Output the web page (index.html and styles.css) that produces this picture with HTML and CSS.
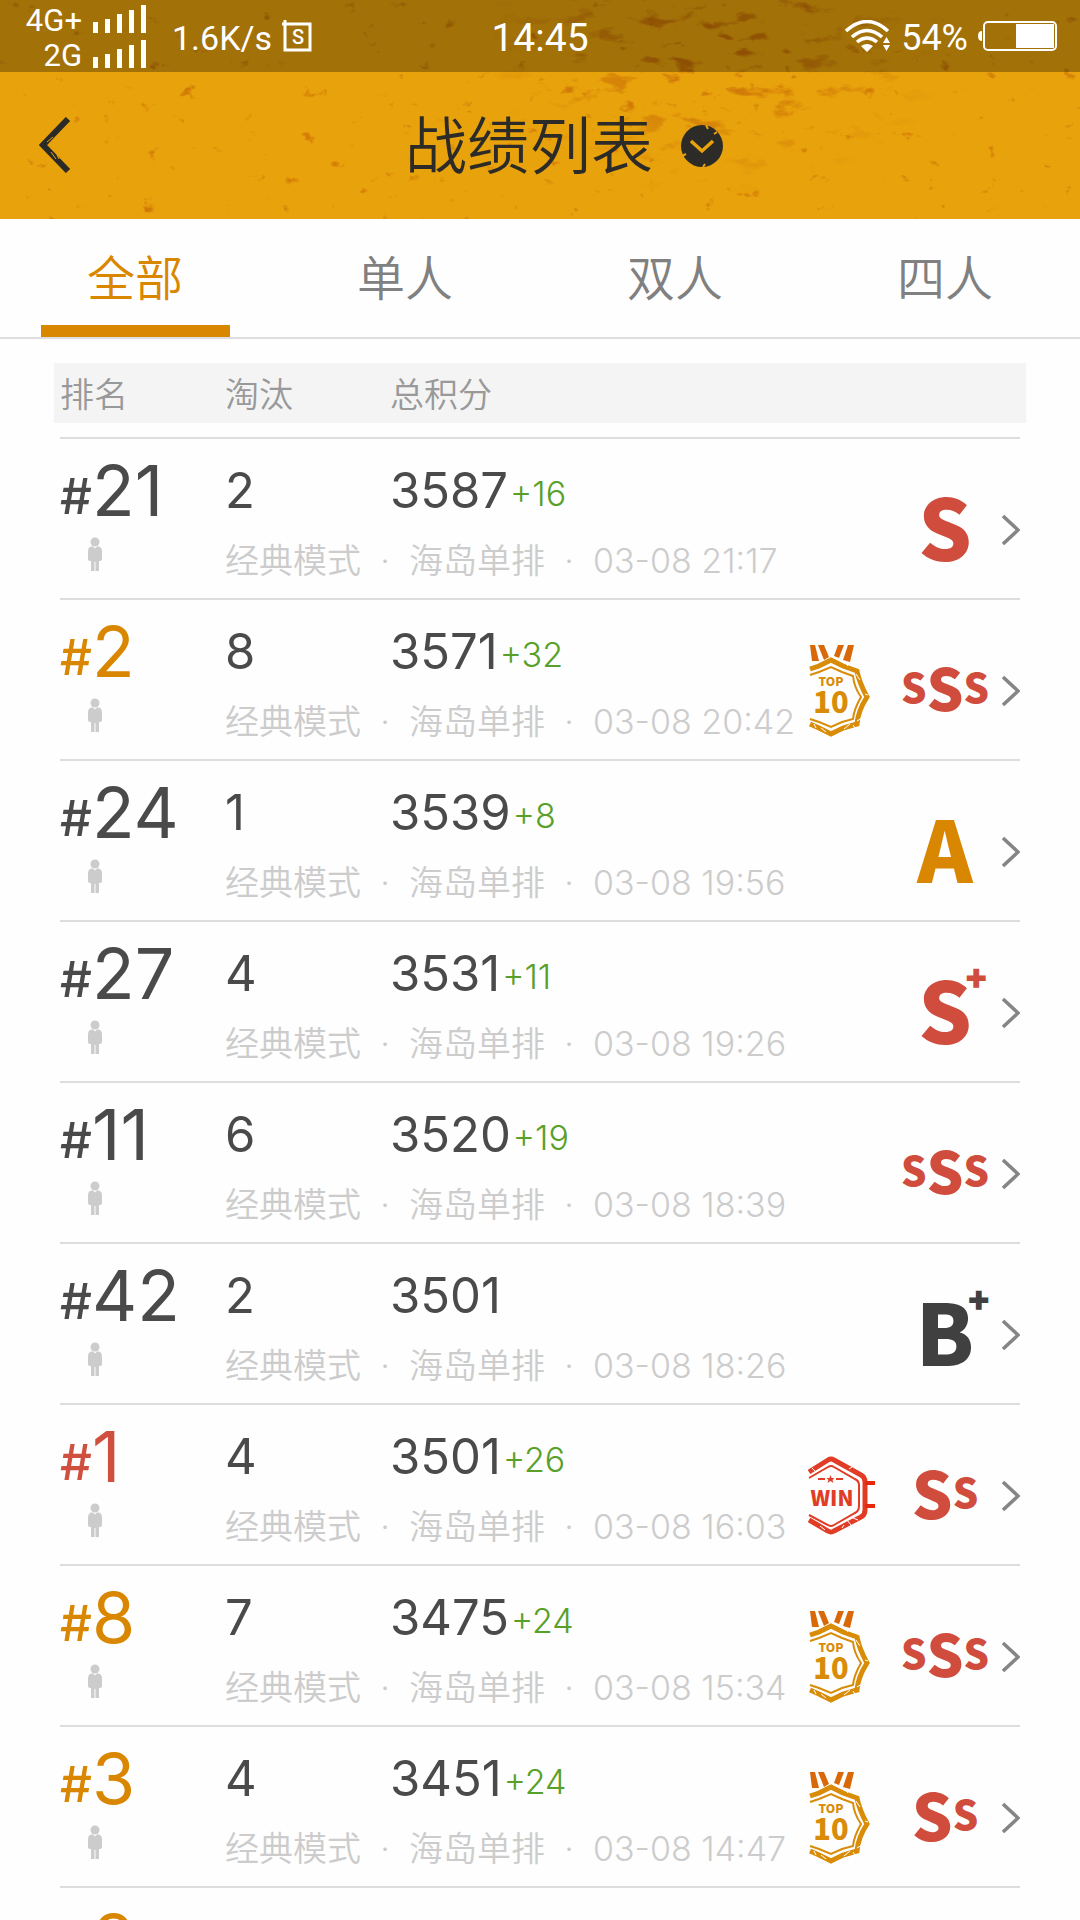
FILE: index.html
```html
<!DOCTYPE html>
<html lang="zh-CN">
<head>
<meta charset="utf-8">
<meta name="viewport" content="width=device-width, initial-scale=1">
<title>战绩列表</title>
<link rel="stylesheet" href="styles.css">
</head>
<body>
<svg class="defs" aria-hidden="true">
  <symbol id="person" viewBox="0 0 14 34"><circle cx="7" cy="5" r="4.500"/><path d="M3 9.500h2l2 2 2-2h2q3 1 3 5v7.500q0 2-2 2h-1v10H7.500v-9h-1v9H3v-10H2q-2 0-2-2v-7.500q0-4 3-5z"/></symbol>
  <symbol id="chevron" viewBox="0 0 18 32"><path d="M1 2l15 14L1 30" fill="none" stroke="#858585" stroke-width="3.500"/></symbol>
  <symbol id="bars" viewBox="0 0 54 28"><path d="M0 17h5v11H0zM12 14h5v14h-5zM24 9h5v19h-5zM36 5h5v23h-5zM48 0h5v28h-5z"/></symbol>
  <symbol id="top10" viewBox="0 0 68 92">
    <path d="M2 0h5l4 16H4zM10 0h6l5 12-5 3zM30 0h6l-5 13-5-2zM40 0h6l-4 17-7-2z" fill="#d96808"/>
    <path d="M2 24l9-3 12-6 12 6 14 5q2 11 10 26-9 14-10 27l-14 4-12 6-12-6-9-4" fill="none" stroke="#d88c08" stroke-width="5"/>
    <path d="M2 30l9-3 12-5 11 5 11 4q1 11 8 21-7 12-8 22l-11 3-11 5-12-5-9-3" fill="none" stroke="#d88c08" stroke-width="2"/>
    <path d="M37 17l3 4M48 29l4 6M57 49l3 1M49 76l5-3M36 84l6-5M13 83l5 4M45 80l2 3M6 79l2 4" stroke="#fff"/>
  </symbol>
  <symbol id="win" viewBox="0 0 68 92">
    <path d="M1 22L20 10q3-2 6 0l27 15q4 2 4 7v28q0 5-4 7L26 81q-3 2-6 0L1 70" fill="none" stroke="#e03c26" stroke-width="5"/>
    <path d="M1 28l19-11q3-2 6 0l21 12q4 2 4 6v21q0 5-4 7L26 75q-3 2-6 0L1 65" fill="none" stroke="#e03c26" stroke-width="2"/>
    <path d="M57 33h10M57 56h10" fill="none" stroke="#e8280c" stroke-width="4"/>
    <path d="M10 29h7M28 29h7" stroke="#e03c26" stroke-width="2"/>
    <path d="M22.500 25l1 3h3l-2 2 1 3-3-2-3 2 1-3-2-2h3z" fill="#e03c26"/>
    <path d="M4 18l3 3M12 76l5 4M39 70l4 5M45 68l5 2M34 78l2-3M41 19l3-2" stroke="#fff"/>
  </symbol>
</svg>

<div class="app">
  <div class="masthead">
    <svg class="grunge" aria-hidden="true">
      <defs>
        <filter id="specks" x="0" y="0" width="1" height="1" color-interpolation-filters="sRGB"><feTurbulence type="fractalNoise" baseFrequency="0.050 0.070" numOctaves="5" seed="8"/><feColorMatrix values="0 0 0 0 .82  0 0 0 0 .48  0 0 0 0 .02  7 0 0 0 -5.100"/></filter>
        <filter id="cracks" x="0" y="0" width="1" height="1" color-interpolation-filters="sRGB"><feTurbulence type="fractalNoise" baseFrequency="0.030 0.070" numOctaves="6" seed="21"/><feColorMatrix values="0 0 0 0 .78  0 0 0 0 .42  0 0 0 0 .02  7 0 0 0 -4.200"/></filter>
        <radialGradient id="fade"><stop offset="0" stop-color="#fff"/><stop offset="1" stop-color="#000"/></radialGradient>
        <mask id="patch"><ellipse cx="66%" cy="24%" rx="22%" ry="65%" fill="url(#fade)"/></mask>
      </defs>
      <rect width="100%" height="100%" filter="url(#specks)"/>
      <g mask="url(#patch)"><rect width="100%" height="100%" filter="url(#cracks)"/></g>
    </svg>
    <div class="status">
      <div class="networks">
        <span>4G+</span><svg class="bars"><use href="#bars"/></svg>
        <span>2G</span><svg class="bars"><use href="#bars"/></svg>
      </div>
      <span class="speed">1.6K/s</span>
      <svg class="sbox" viewBox="0 0 30 32" aria-hidden="true"><path d="M0 4h28v26H3V0" fill="none" stroke="#fff" stroke-width="3"/><text x="16" y="24" font-size="20" text-anchor="middle">S</text></svg>
      <time class="clock">14:45</time>
      <div class="power">
        <svg class="wifi" viewBox="0 0 46 32" aria-hidden="true"><path d="M1 11q21-19 42 0M7 17q15-13 30 0M12 22q10-8 20 0" fill="none" stroke="#fff" stroke-width="3.500"/><path d="M16 26q6-4 12 0l-6 6zM38 23l3.500-6 3.500 6zM38 25l3.500 6 3.500-6z" fill="#fff"/></svg>
        <span>54%</span>
        <svg class="battery" viewBox="0 0 80 32" aria-hidden="true"><rect x="6" y="2" width="72" height="28" rx="4" fill="none" stroke="#fff" stroke-width="2"/><path d="M4 11q-4 0-4 5t4 5zM38 4h38v24H38z" fill="#fff"/></svg>
      </div>
    </div>
    <header class="titlebar">
      <button class="back" aria-label="返回"><svg viewBox="0 0 32 56"><path d="M29 2L4 28l25 26" fill="none" stroke="#2a2a26" stroke-width="6"/><path d="M8 25l6-5M12 35l5 7M18 38l2 4" stroke="#e8a20c"/></svg></button>
      <h1>战绩列表</h1>
      <button class="more" aria-label="切换列表"><svg viewBox="0 0 42 42"><circle cx="21" cy="21" r="21" fill="#2c2b28"/><path d="M10 16l11 10 11-10" fill="none" stroke="#e8a20c" stroke-width="3.500"/><path d="M25 0l2 4M1 31l4-2M22 42l2-3M36 7l-3 2" stroke="#e8a20c" stroke-width="2"/></svg></button>
    </header>
  </div>

  <nav class="tabs">
    <button class="tab active">全部</button>
    <button class="tab">单人</button>
    <button class="tab">双人</button>
    <button class="tab">四人</button>
  </nav>

  <main class="list">
    <table>
      <thead><tr><th>排名</th><th>淘汰</th><th>总积分</th></tr></thead>
      <tbody>
        <tr><th class="rank" rowspan="2"><b><i>#</i>21</b><svg class="person"><use href="#person"/></svg></th><td class="kills">2</td><td class="score">3587<em>+16</em></td><td class="emblems" rowspan="2"><span class="grade">S</span><a href="#r1" aria-label="详情"><svg class="chevron"><use href="#chevron"/></svg></a></td></tr>
        <tr><td class="meta" colspan="2"><span>经典模式</span><span class="dot">·</span><span>海岛单排</span><span class="dot">·</span><time>03-08 21:17</time></td></tr>
      </tbody>
      <tbody>
        <tr><th class="rank gold" rowspan="2"><b><i>#</i>2</b><svg class="person"><use href="#person"/></svg></th><td class="kills">8</td><td class="score">3571<em>+32</em></td><td class="emblems" rowspan="2"><svg class="medal top" viewBox="0 0 68 92"><use href="#top10"/><text x="23" y="41" font-size="12">TOP</text><text x="23" y="68" font-size="29">10</text></svg><span class="grade triple"><small>S</small>S<small>S</small></span><a href="#r2" aria-label="详情"><svg class="chevron"><use href="#chevron"/></svg></a></td></tr>
        <tr><td class="meta" colspan="2"><span>经典模式</span><span class="dot">·</span><span>海岛单排</span><span class="dot">·</span><time>03-08 20:42</time></td></tr>
      </tbody>
      <tbody>
        <tr><th class="rank" rowspan="2"><b><i>#</i>24</b><svg class="person"><use href="#person"/></svg></th><td class="kills">1</td><td class="score">3539<em>+8</em></td><td class="emblems" rowspan="2"><span class="grade a">A</span><a href="#r3" aria-label="详情"><svg class="chevron"><use href="#chevron"/></svg></a></td></tr>
        <tr><td class="meta" colspan="2"><span>经典模式</span><span class="dot">·</span><span>海岛单排</span><span class="dot">·</span><time>03-08 19:56</time></td></tr>
      </tbody>
      <tbody>
        <tr><th class="rank" rowspan="2"><b><i>#</i>27</b><svg class="person"><use href="#person"/></svg></th><td class="kills">4</td><td class="score">3531<em>+11</em></td><td class="emblems" rowspan="2"><span class="grade">S<sup>+</sup></span><a href="#r4" aria-label="详情"><svg class="chevron"><use href="#chevron"/></svg></a></td></tr>
        <tr><td class="meta" colspan="2"><span>经典模式</span><span class="dot">·</span><span>海岛单排</span><span class="dot">·</span><time>03-08 19:26</time></td></tr>
      </tbody>
      <tbody>
        <tr><th class="rank" rowspan="2"><b><i>#</i>11</b><svg class="person"><use href="#person"/></svg></th><td class="kills">6</td><td class="score">3520<em>+19</em></td><td class="emblems" rowspan="2"><span class="grade triple"><small>S</small>S<small>S</small></span><a href="#r5" aria-label="详情"><svg class="chevron"><use href="#chevron"/></svg></a></td></tr>
        <tr><td class="meta" colspan="2"><span>经典模式</span><span class="dot">·</span><span>海岛单排</span><span class="dot">·</span><time>03-08 18:39</time></td></tr>
      </tbody>
      <tbody>
        <tr><th class="rank" rowspan="2"><b><i>#</i>42</b><svg class="person"><use href="#person"/></svg></th><td class="kills">2</td><td class="score">3501</td><td class="emblems" rowspan="2"><span class="grade b">B<sup>+</sup></span><a href="#r6" aria-label="详情"><svg class="chevron"><use href="#chevron"/></svg></a></td></tr>
        <tr><td class="meta" colspan="2"><span>经典模式</span><span class="dot">·</span><span>海岛单排</span><span class="dot">·</span><time>03-08 18:26</time></td></tr>
      </tbody>
      <tbody>
        <tr><th class="rank red" rowspan="2"><b><i>#</i>1</b><svg class="person"><use href="#person"/></svg></th><td class="kills">4</td><td class="score">3501<em>+26</em></td><td class="emblems" rowspan="2"><svg class="medal first" viewBox="0 0 68 92"><use href="#win"/><text x="24" y="56" font-size="21">WIN</text></svg><span class="grade double">S<small>S</small></span><a href="#r7" aria-label="详情"><svg class="chevron"><use href="#chevron"/></svg></a></td></tr>
        <tr><td class="meta" colspan="2"><span>经典模式</span><span class="dot">·</span><span>海岛单排</span><span class="dot">·</span><time>03-08 16:03</time></td></tr>
      </tbody>
      <tbody>
        <tr><th class="rank gold" rowspan="2"><b><i>#</i>8</b><svg class="person"><use href="#person"/></svg></th><td class="kills">7</td><td class="score">3475<em>+24</em></td><td class="emblems" rowspan="2"><svg class="medal top" viewBox="0 0 68 92"><use href="#top10"/><text x="23" y="41" font-size="12">TOP</text><text x="23" y="68" font-size="29">10</text></svg><span class="grade triple"><small>S</small>S<small>S</small></span><a href="#r8" aria-label="详情"><svg class="chevron"><use href="#chevron"/></svg></a></td></tr>
        <tr><td class="meta" colspan="2"><span>经典模式</span><span class="dot">·</span><span>海岛单排</span><span class="dot">·</span><time>03-08 15:34</time></td></tr>
      </tbody>
      <tbody>
        <tr><th class="rank gold" rowspan="2"><b><i>#</i>3</b><svg class="person"><use href="#person"/></svg></th><td class="kills">4</td><td class="score">3451<em>+24</em></td><td class="emblems" rowspan="2"><svg class="medal top" viewBox="0 0 68 92"><use href="#top10"/><text x="23" y="41" font-size="12">TOP</text><text x="23" y="68" font-size="29">10</text></svg><span class="grade double">S<small>S</small></span><a href="#r9" aria-label="详情"><svg class="chevron"><use href="#chevron"/></svg></a></td></tr>
        <tr><td class="meta" colspan="2"><span>经典模式</span><span class="dot">·</span><span>海岛单排</span><span class="dot">·</span><time>03-08 14:47</time></td></tr>
      </tbody>
      <tbody>
        <tr><th class="rank gold" rowspan="2"><b><i>#</i>8</b></th></tr>
      </tbody>
    </table>
  </main>
</div>
</body>
</html>
```
FILE: styles.css
```css
* { box-sizing: border-box; }
body {
  margin: 0;
  background: #fefefe;
  color: #4a4a4a;
  font-family: Inter, "Noto Sans CJK SC", sans-serif;
}
button { margin: 0; padding: 0; border: 0; background: none; font: inherit; color: inherit; }
svg { display: block; }
.defs { position: absolute; width: 0; height: 0; }
.app { display: flex; flex-direction: column; height: 100vh; overflow: hidden; }

/* Status bar and title */
.masthead { position: relative; flex: none; background: #e8a20c; }
.grunge { position: absolute; inset: 0; width: 100%; height: 100%; }
.status {
  position: relative;
  display: flex;
  align-items: center;
  height: 72px;
  padding: 0 22px;
  background: rgba(0, 0, 0, .3);
  color: #fff;
  fill: #fff;
  font: 34px/40px Roboto, sans-serif;
}
.networks {
  display: grid;
  grid-template-columns: 60px 54px;
  column-gap: 11px;
  align-items: center;
  justify-items: end;
  font-size: 31px;
  line-height: 35px;
}
.networks span { padding-top: 4px; line-height: 31px; }
.bars { width: 54px; height: 28px; }
.speed { margin-left: 25px; padding-top: 4px; }
.sbox { width: 30px; height: 32px; margin-left: 10px; font-weight: 500; }
.clock { position: absolute; left: 0; right: 0; padding-top: 4px; text-align: center; font-size: 39px; }
.power { display: flex; align-items: center; gap: 10px; margin-left: auto; font-size: 36px; }
.power span { padding-top: 4px; }
.wifi { width: 46px; height: 32px; }
.battery { width: 80px; height: 32px; }
.titlebar {
  position: relative;
  display: flex;
  align-items: center;
  justify-content: center;
  gap: 28px;
  height: 147px;
  padding-left: 48px;
  color: #2c2b28;
}
.titlebar h1 { margin: 0; padding-top: 3px; font-size: 62px; line-height: 80px; font-weight: 350; }
.back { position: absolute; left: 39px; top: 45px; }
.back svg { width: 32px; height: 56px; }
.more svg { width: 42px; height: 42px; }

/* Mode tabs */
.tabs { flex: none; display: grid; grid-template-columns: repeat(4, 1fr); border-bottom: 2px solid #ddd; }
.tab {
  display: flex;
  flex-direction: column;
  align-items: center;
  height: 118px;
  padding-top: 25px;
  color: #808080;
  font-size: 48px;
  line-height: 70px;
  font-weight: 350;
}
.tab.active { color: #d98600; }
.tab.active::after { content: ""; width: 70%; height: 12px; margin-top: auto; background: #d98600; }

/* Match records */
.list { flex: 1; min-height: 0; padding: 24px 54px 0; overflow: hidden; }
table { display: block; }
th, td { padding: 0; text-align: left; font-weight: 400; }
tr { display: contents; }
thead, tbody { display: grid; grid-template-columns: 165px 165px 1fr 212px; }
thead {
  padding: 4px 6px 0;
  margin-bottom: 14px;
  background: #f4f4f4;
  color: #999;
  font-size: 34px;
  line-height: 56px;
}
thead th { font-weight: 350; }
tbody {
  grid-template-rows: 94px 65px;
  margin: 0 6px;
  border-top: 2px solid #ddd;
}
.rank { grid-row: 1 / 3; grid-column: 1; padding-top: 12px; }
.rank b { display: block; font-size: 70px; line-height: 80px; font-weight: 400; }
.rank i { font-size: 50px; line-height: 50px; font-style: normal; font-weight: 500; vertical-align: 2px; }
.rank.gold { color: #d98600; }
.rank.red { color: #d05040; }
.person { width: 14px; height: 34px; margin: 6px 0 0 28px; fill: #ccc; }
.kills, .score { padding-top: 22px; font-size: 49px; line-height: 60px; }
.score em {
  margin-left: 2px;
  color: #58a028;
  font-size: 34px;
  line-height: 34px;
  font-style: normal;
  font-weight: 300;
  vertical-align: 2px;
}
.meta {
  grid-row: 2;
  grid-column: 2 / 4;
  display: flex;
  color: #ccc;
  font-size: 34px;
  line-height: 56px;
  font-weight: 300;
  white-space: nowrap;
}
.meta span { font-weight: 350; }
.dot { width: 48px; text-align: center; }
.emblems {
  grid-row: 1 / 3;
  grid-column: 4;
  display: grid;
  grid-template-columns: 68px 1fr 18px;
  column-gap: 12px;
  align-items: center;
  padding-top: 22px;
}
.emblems a { grid-column: 3; }
.chevron { width: 18px; height: 32px; }
.medal {
  width: 68px;
  height: 92px;
  font-family: "Noto Sans CJK SC", sans-serif;
  font-weight: 900;
  text-anchor: middle;
}
.medal.top { fill: #d88c08; }
.medal.first { fill: #e03c26; }
.grade {
  grid-column: 2;
  grid-row: 1;
  position: relative;
  display: flex;
  align-items: center;
  justify-content: center;
  justify-self: center;
  margin-left: 12px;
  padding-bottom: 10px;
  color: #d04c3c;
  font-family: "Noto Sans CJK SC", sans-serif;
  font-size: 84px;
  line-height: 84px;
  font-weight: 900;
}
.grade.double, .grade.triple { font-size: 58px; }
.grade.double { font-size: 64px; }
.grade small { font-size: 40px; }
.grade.a { color: #d98600; }
.grade.b { color: #404040; }
.grade sup {
  position: absolute;
  left: 100%;
  top: -8px;
  margin-left: -8px;
  font: 900 36px/36px Inter, sans-serif;
}
```
